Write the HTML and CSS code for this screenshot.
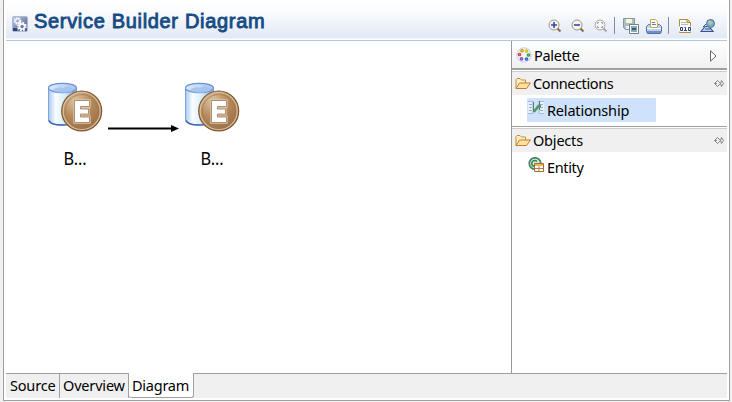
FILE: index.html
```html
<!DOCTYPE html>
<html lang="en">
<head>
<meta charset="utf-8">
<title>Service Builder Diagram</title>
<link rel="stylesheet" href="styles.css">
</head>
<body>
<svg class="defs" aria-hidden="true">
  <defs>
    <linearGradient id="cyl"><stop offset="0" stop-color="#a9c9ee"/><stop offset=".25" stop-color="#fafdff"/><stop offset=".55" stop-color="#d8f0fa"/><stop offset="1" stop-color="#8fb8e6"/></linearGradient>
    <linearGradient id="lid"><stop offset="0" stop-color="#dbe9fb"/><stop offset="1" stop-color="#a9c6ee"/></linearGradient>
    <radialGradient id="coin" cx=".35" cy=".25" r=".8"><stop offset="0" stop-color="#dcc3a3"/><stop offset=".5" stop-color="#b58a5c"/><stop offset="1" stop-color="#986c40"/></radialGradient>
    <linearGradient id="gear" x2="1" y2="1"><stop offset="0" stop-color="#c2cbe0"/><stop offset=".5" stop-color="#8792b5"/><stop offset="1" stop-color="#333c7c"/></linearGradient>
    <symbol id="entity" viewBox="0 0 56 52">
      <path d="M1.500 6v32c0 3 6 5 14 5s14-2 14-5V6z" fill="url(#cyl)" stroke="#7da3de" stroke-width="1"/>
      <path d="M2 38.500c1 3 6 4.500 13 4.500 6 0 10-1 13-3" fill="none" stroke="#3e65b5" stroke-width="1.500"/>
      <ellipse cx="15.500" cy="6" rx="14" ry="4.700" fill="url(#lid)" stroke="#6c90d4" stroke-width="1.200"/>
      <path d="M5 8q7-4 11-2l5-2q4 2 7 3-4 4-12 4-7 0-11-3z" fill="#9fc0ee" opacity=".8"/>
      <circle cx="34.700" cy="29" r="20" fill="url(#coin)" stroke="#805831" stroke-width="1.200"/>
      <circle cx="34.700" cy="29" r="18.500" fill="none" stroke="#d8bf9f" stroke-width="1.200"/>
      <circle cx="34.700" cy="29" r="16.500" fill="none" stroke="#a17a51" stroke-width=".7"/>
      <path d="M27.500 18.500h15v6h-9v2.500h8v5h-8V35h9v5.500h-15z" fill="#fff" stroke="#d9c5ac" stroke-width="2.400"/>
      <path d="M27.500 18.500h15v6h-9v2.500h8v5h-8V35h9v5.500h-15z" fill="#fff" stroke="#a07a54" stroke-width=".8"/>
    </symbol>
    <symbol id="folder" viewBox="0 0 16 13">
      <path d="M1 11.500V2.500l1-1h3l1.500 1.500h4v3" fill="#fff0c2" stroke="#c88b3c"/>
      <path d="M1 11.500L4.500 6h11l-4 5.500z" fill="#ffe0a0" stroke="#c17c31"/>
    </symbol>
    <symbol id="pin" viewBox="0 0 10 7">
      <path d="M3.500.500L.5 3.500l3 3 3-3M3.500.500l3 3 1-3 2 3-2 3-1-3M1 3.500h2" fill="none" stroke="#77776c" stroke-width=".9"/>
    </symbol>
  </defs>
</svg>
<div class="editor">
  <header class="header">
    <svg class="gear" viewBox="0 0 16 16"><rect x=".5" y=".5" width="15" height="15" rx="1.500" fill="url(#gear)" stroke="#a9bbd8"/><circle cx="5.500" cy="5" r="2.700" fill="none" stroke="#f5f8fd" stroke-width="2.200" stroke-dasharray="1.500 .7"/><circle cx="5.500" cy="5" r="2" fill="none" stroke="#f5f8fd"/><circle cx="10" cy="10.500" r="3.700" fill="none" stroke="#fff" stroke-width="2.200" stroke-dasharray="1.700 1.200"/><circle cx="10" cy="10.500" r="2.500" fill="none" stroke="#fff" stroke-width="1.500"/><path d="M1 12h4v3H1z" fill="#36427f"/></svg>
    <h1 class="title">Service Builder Diagram</h1>
    <div class="toolbar">
      <svg class="tool" viewBox="0 0 16 16"><path d="M10 10l3.500 3.500" stroke="#8b7060" stroke-width="2.200"/><circle cx="7" cy="7" r="5" fill="#f4f6ed" stroke="#a49877"/><path d="M7 4v6M4 7h6" stroke="#3343c4" stroke-width="1.600"/></svg>
      <svg class="tool" viewBox="0 0 16 16"><path d="M10 10l3.500 3.500" stroke="#8b7060" stroke-width="2.200"/><circle cx="7" cy="7" r="5" fill="#f4f6ed" stroke="#a49877"/><path d="M4 7h6" stroke="#3343c4" stroke-width="1.600"/></svg>
      <svg class="tool fit" viewBox="0 0 16 16"><path d="M10 10l3.500 3.500" stroke="#aaa" stroke-width="2.200"/><circle cx="7" cy="7" r="5" fill="#f3f4f5" stroke="#aaa"/><path d="M4.500 6V4.500H6m2 0h1.500V6m0 2v1.500H8m-2 0H4.500V8" fill="none" stroke="#999"/></svg>
      <i class="sep"></i>
      <svg class="tool save" viewBox="0 0 16 16"><path d="M.5.500h11v11h-9l-2-2z" fill="#a9c0cc" stroke="#7f98a6"/><path d="M3 1h6v4H3z" fill="#fff5c8"/><path d="M3 8h4v3H3z" fill="#eef4f6"/><path d="M6.500 6.500h9v9h-9z" fill="#fff" stroke="#71818a"/><path d="M8 8h6v6H8z" fill="#8aacb6"/><path d="M9 10h4v2H9z" fill="#3f596c"/></svg>
      <svg class="tool print" viewBox="0 0 16 16"><path d="M.5 8.500l2-2h11l2 2v5l-1 2h-13l-1-2z" fill="#bdd0ec" stroke="#5672a9"/><path d="M4.500 9.500V1.500h5l2 2v6z" fill="#fffdf0" stroke="#c5a85b"/><path d="M6 4.500h3M6 6.500h4" stroke="#667da6"/><path d="M1 10.500h14" stroke="#fff"/><path d="M1 14h14" stroke="#5278bd" stroke-width="1.500"/></svg>
      <i class="sep two"></i>
      <svg class="tool binary" viewBox="0 0 16 16"><path d="M2.500 14.500V1.500h8l3 3v10z" fill="#fffdf0" stroke="#b48b39"/><path d="M10 1.500v3h3" fill="#edcc75" stroke="#b48b39"/><path d="M4 4.500h5M4 6.500h7" stroke="#aebdd5"/><path d="M2 8.500h13v5H2z" fill="#fff"/><path d="M3.500 9.500h2v3h-2zm4 0h1v3m-1.500 0h3M11.500 9.500h2v3h-2z" fill="none" stroke="#253c77"/></svg>
      <svg class="tool globe" viewBox="0 0 16 16"><path d="M1 13.500l4-5h4l4 5z" fill="#bfd0e8" stroke="#37558f" stroke-width="1.200"/><path d="M5 11h5M3 9l3-3" stroke="#37558f"/><circle cx="10.500" cy="5.500" r="4" fill="#7ba9d6" stroke="#5071a5"/><path d="M8 5l2-2 3 1-1 2-2 1z" fill="#a9cf80"/><path d="M8.500 4l1.500-1" stroke="#f1f6d5"/></svg>
    </div>
  </header>
  <main class="workspace">
    <section class="canvas">
      <div class="node"><svg class="entity"><use href="#entity"/></svg><span class="label">B...</span></div>
      <svg class="edge" viewBox="0 0 71 9"><path d="M0 4.500h64" stroke="#000" stroke-width="2"/><path d="M63 1l8 3.500L63 8z"/></svg>
      <div class="node"><svg class="entity"><use href="#entity"/></svg><span class="label">B...</span></div>
    </section>
    <aside class="palette">
      <div class="palette-head">
        <svg class="icon" viewBox="0 0 16 16"><circle cx="8" cy="8" r="7.200" fill="#edf3fd" stroke="#c1d0eb"/><g fill="#fff" stroke-width="1.500"><circle cx="6" cy="3.700" r="1.100" stroke="#e0a11d"/><circle cx="10.500" cy="4" r="1.100" stroke="#ddc30c"/><circle cx="3.500" cy="7.500" r="1.100" stroke="#d44d38"/><circle cx="12.500" cy="8" r="1.100" stroke="#4c9c46"/><circle cx="5.500" cy="11.800" r="1.100" stroke="#8d54b5"/><circle cx="10.500" cy="12" r="1.100" stroke="#386bc0"/></g></svg>
        <span class="text palette-text">Palette</span>
        <svg class="expand" viewBox="0 0 7 12"><path d="M.5.800v10.400L6 6z" fill="#fff" stroke="#666"/></svg>
      </div>
      <div class="group"><svg class="folder"><use href="#folder"/></svg><span class="text connections">Connections</span><svg class="pin"><use href="#pin"/></svg></div>
      <div class="entries">
        <div class="entry selected"><svg class="icon" viewBox="0 0 16 16"><path d="M0 1.500h5v12H0M16 1.500h-5v12h5" fill="#e5f0fa" stroke="#a3bbd8"/><path d="M1 4.500h3m-3 3h3m-3 3h3m8-6h3m-3 3h3m-3 3h3" stroke="#8fb0d2"/><path d="M5.500 2v9M11.500 1v9" stroke="#66737d"/><path d="M5 11h1.500l4-5H13" fill="none" stroke="#4f955a" stroke-width="2.400"/></svg><span class="text relationship">Relationship</span></div>
      </div>
      <div class="group second"><svg class="folder"><use href="#folder"/></svg><span class="text objects">Objects</span><svg class="pin"><use href="#pin"/></svg></div>
      <div class="entries">
        <div class="entry"><svg class="icon" viewBox="0 0 16 16"><circle cx="7" cy="6.500" r="5.700" fill="#d5ebdd" stroke="#438765" stroke-width="1.800"/><path d="M9 4.500a3 3 0 1 0 0 4" fill="none" stroke="#398260" stroke-width="1.500"/><path d="M6.500 6.500h9v8h-9z" fill="#fff" stroke="#a86b2c"/><path d="M7 7h8v2H7z" fill="#efb557"/><path d="M7 11.500h8M11 9v5" stroke="#b88145"/></svg><span class="text entity-text">Entity</span></div>
      </div>
    </aside>
  </main>
  <nav class="tabs"><div class="tab source"><span class="text">Source</span></div><div class="tab overview"><span class="text">Overview</span></div><div class="tab active"><span class="text">Diagram</span></div></nav>
</div>
</body>
</html>
```
FILE: styles.css
```css
* { box-sizing: border-box; }
body { margin: 0; height: 402px; overflow: hidden; padding: 0 2px 1px 3px; background: #f0f0f0; color: #000; font: 14.5px/20px "Noto Sans", sans-serif; letter-spacing: -.18px; }
svg { display: block; flex: none; }
.defs { position: absolute; width: 0; height: 0; }
.editor { height: 401px; display: flex; flex-direction: column; background: #fff; border: solid #a0a0a0; border-width: 0 1px 1px; padding: 0 2px 2px; }
.header { height: 41px; flex: none; display: flex; border-bottom: 1px solid #b1c9df; background: linear-gradient(#fff 0, #fbfcfe 25%, #e2e9f4 38px, #fff 39px); }
.gear { width: 16px; height: 16px; margin: 16px 0 0 6px; }
.title { margin: 9px 0 0 6px; font: 20px/24px "Liberation Sans", sans-serif; letter-spacing: .68px; -webkit-text-stroke: .9px #174c83; color: #174c83; white-space: nowrap; }
.toolbar { margin-left: auto; display: flex; padding: 18px 11px 0 0; }
.tool { width: 16px; height: 16px; margin-right: 7px; }
.fit { margin-right: 5px; }
.sep { width: 1px; height: 17px; background: #858b94; margin: -1px 8px 0 0; }
.save { margin-right: 7px; }
.print { margin-right: 6px; }
.two { margin-right: 8px; }
.globe { margin-right: 0; }
.workspace { height: 332px; flex: none; display: flex; }
.canvas { width: 505px; display: flex; align-items: flex-start; padding: 41px 0 0 41px; }
.node { width: 56px; display: flex; flex-direction: column; align-items: center; }
.entity { width: 56px; height: 52px; }
.label { font-size: 18.5px; line-height: 22px; margin-top: 13px; transform: scaleX(.88); }
.edge { width: 71px; height: 9px; margin: 42px 5px 0; }
.palette { flex: 1; border-left: 1px solid #999; }
.palette-head { height: 27px; display: flex; align-items: center; padding: 0 10px 0 4px; background: linear-gradient(#fff, #f0f0f0); }
.icon { width: 16px; height: 16px; }
.text { white-space: nowrap; }
.palette-text { margin-left: 2px; letter-spacing: -.3px; }
.expand { width: 7px; height: 12px; margin: 2px 0 0 auto; }
.group { height: 27px; display: flex; align-items: center; padding: 1px 3px 0; border-top: 2px solid #a0a0a0; background: linear-gradient(#fff 0 1px, #ccc 1px 2px, #f0f0f0 2px); }
.folder { width: 16px; height: 13px; margin-right: 2px; }
.connections { letter-spacing: -.4px; }
.objects { letter-spacing: -.2px; }
.pin { width: 10px; height: 7px; margin-left: auto; }
.entries { padding: 3px 0 0 15px; height: 31px; }
.entry { width: 129px; height: 24px; display: flex; align-items: center; padding-left: 1px; gap: 3px; }
.entry .icon { margin-top: -4px; }
.entity-text { letter-spacing: -.35px; }
.selected { background: #cee2fb; border-radius: 1px; }
.second { height: 26px; border-top-width: 1px; padding-top: 1px; }
.tabs { height: 25px; flex: none; display: flex; background: #f0f0f0; border-top: 1px solid #a0a0a0; }
.tab { height: 24px; border-right: 1px solid #a0a0a0; padding-left: 4px; line-height: 22px; overflow: hidden; }
.source { width: 54px; }
.overview { width: 69px; padding-left: 3px; }
.active { width: 65px; height: 25px; margin-top: -1px; padding-left: 3px; line-height: 24px; background: #fff; border-bottom: 1px solid #a0a0a0; border-radius: 0 0 3px 3px; letter-spacing: -.25px; }
```
